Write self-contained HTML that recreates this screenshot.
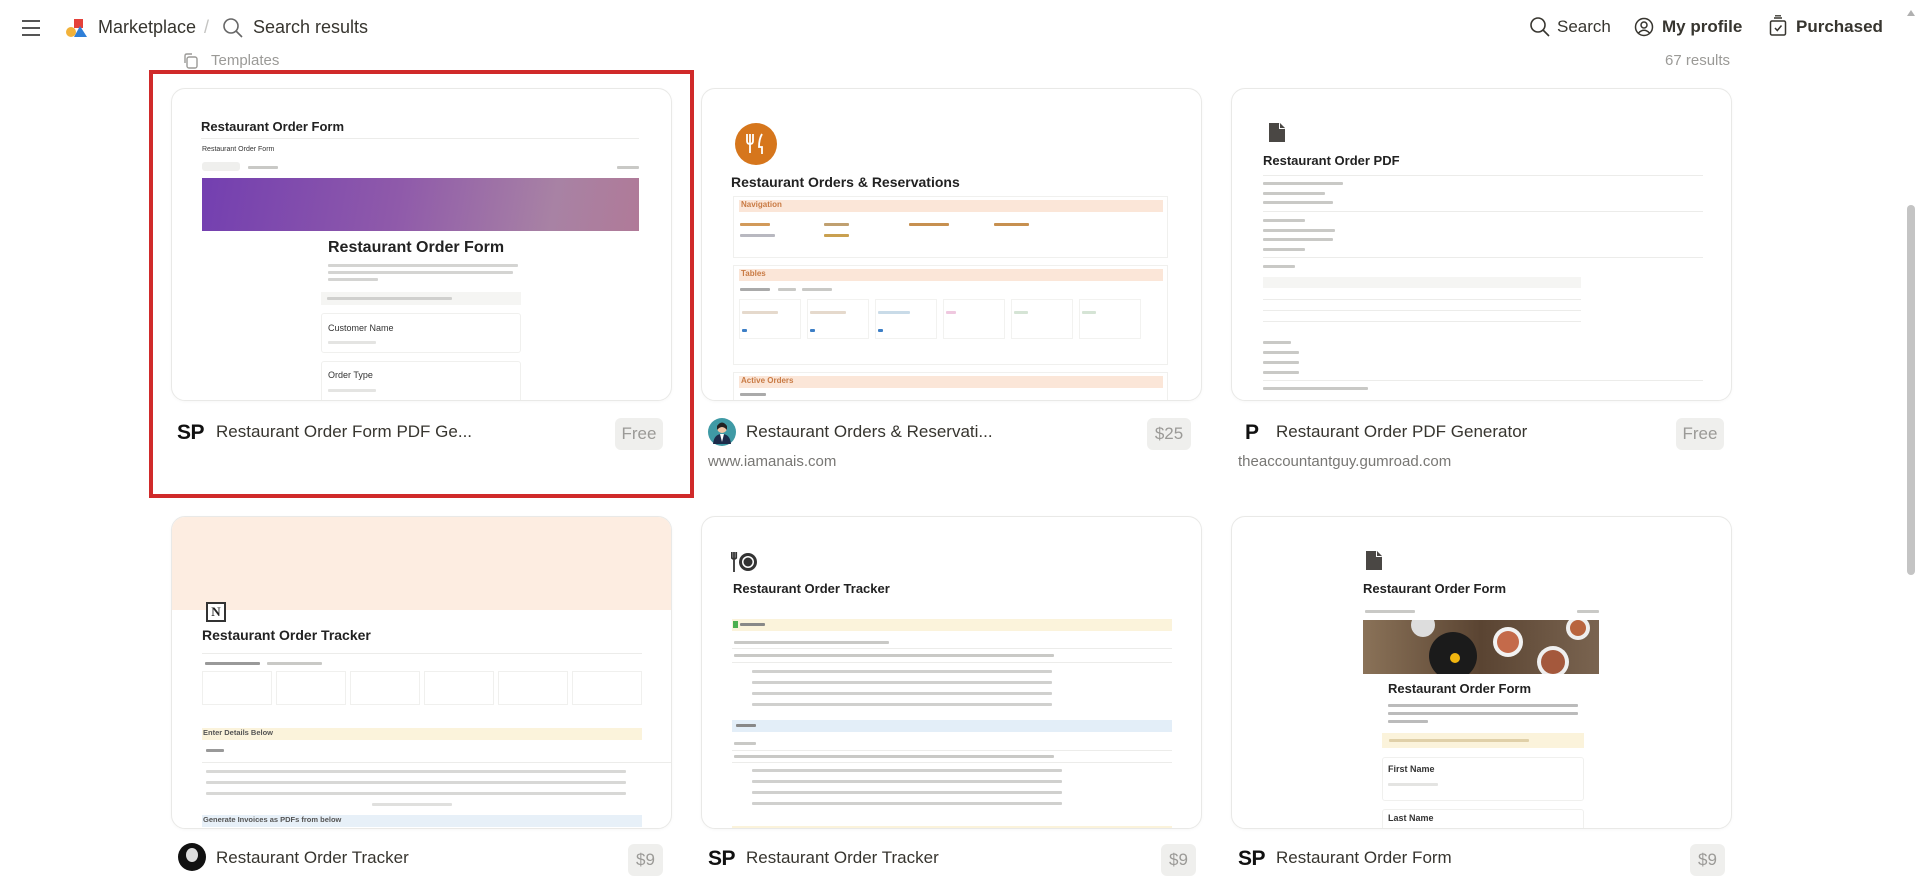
<!DOCTYPE html>
<html><head><meta charset="utf-8">
<style>
*{box-sizing:border-box;margin:0;padding:0}
html,body{width:1918px;height:867px;overflow:hidden;background:#fff;font-family:"Liberation Sans",sans-serif;color:#37352f}
.abs{position:absolute}
.card{position:absolute;width:501px;height:313px;border:1px solid #e9e9e7;border-radius:14px;overflow:hidden;background:#fff;box-shadow:0 1px 3px rgba(0,0,0,.03)}
.t{position:absolute;white-space:nowrap}
.tiny{position:absolute;height:3px;background:#c9c9c6;border-radius:1px}
.ln{position:absolute;height:1px;background:#ececea}
.name{position:absolute;font-size:17px;font-weight:500;color:#37352f;white-space:nowrap}
.badge{position:absolute;height:32px;border-radius:6px;background:#efefed;color:#9b9a97;font-size:17px;line-height:32px;text-align:center}
.sub{position:absolute;font-size:15px;color:#787774}
.sp{position:absolute;font-size:21px;font-weight:bold;color:#111;letter-spacing:-0.5px}
</style></head><body>

<!-- header -->
<div class="abs" style="left:22px;top:20px;width:18px;height:2px;background:#555"></div>
<div class="abs" style="left:22px;top:27px;width:18px;height:2px;background:#555"></div>
<div class="abs" style="left:22px;top:34px;width:18px;height:2px;background:#555"></div>
<svg class="abs" style="left:65px;top:17px" width="24" height="22" viewBox="0 0 24 22">
<circle cx="6" cy="15" r="5" fill="#f2b23a"/><rect x="9" y="2" width="9" height="9" fill="#e4413a"/><polygon points="15,9 22,20 9,20" fill="#2f7fd8"/></svg>
<div class="t" style="left:98px;top:17px;font-size:18px;color:#37352f">Marketplace</div>
<div class="t" style="left:204px;top:17px;font-size:18px;color:#c4c4c2">/</div>
<svg class="abs" style="left:222px;top:17px" width="22" height="22" viewBox="0 0 22 22"><circle cx="9" cy="9" r="7" fill="none" stroke="#666" stroke-width="1.6"/><line x1="14" y1="14" x2="20" y2="20" stroke="#666" stroke-width="1.6"/></svg>
<div class="t" style="left:253px;top:17px;font-size:18px;color:#37352f">Search results</div>

<svg class="abs" style="left:1529px;top:16px" width="22" height="22" viewBox="0 0 22 22"><circle cx="9" cy="9" r="7" fill="none" stroke="#37352f" stroke-width="1.6"/><line x1="14" y1="14" x2="20" y2="20" stroke="#37352f" stroke-width="1.6"/></svg>
<div class="t" style="left:1557px;top:17px;font-size:17px;color:#37352f">Search</div>
<svg class="abs" style="left:1634px;top:17px" width="20" height="20" viewBox="0 0 20 20"><circle cx="10" cy="10" r="8.5" fill="none" stroke="#37352f" stroke-width="1.5"/><circle cx="10" cy="8" r="3" fill="none" stroke="#37352f" stroke-width="1.5"/><path d="M4.5 16 Q10 10.5 15.5 16" fill="none" stroke="#37352f" stroke-width="1.5"/></svg>
<div class="t" style="left:1662px;top:17px;font-size:17px;font-weight:bold;color:#37352f">My profile</div>
<svg class="abs" style="left:1768px;top:15px" width="20" height="22" viewBox="0 0 20 22"><rect x="2.5" y="6" width="15" height="14" rx="1.5" fill="none" stroke="#37352f" stroke-width="1.5"/><line x1="6" y1="3" x2="14" y2="3" stroke="#37352f" stroke-width="1.5"/><line x1="7" y1="0.8" x2="13" y2="0.8" stroke="#37352f" stroke-width="1.3"/><path d="M7 13 L9.3 15.5 L13.5 10.5" fill="none" stroke="#37352f" stroke-width="1.5"/></svg>
<div class="t" style="left:1796px;top:17px;font-size:17px;font-weight:bold;color:#37352f">Purchased</div>

<svg class="abs" style="left:182px;top:52px" width="18" height="18" viewBox="0 0 18 18"><rect x="5" y="5" width="10" height="11" rx="2" fill="none" stroke="#9b9a97" stroke-width="1.4"/><path d="M3 11 V4 Q3 2 5 2 H10" fill="none" stroke="#9b9a97" stroke-width="1.4"/></svg>
<div class="t" style="left:211px;top:52px;font-size:15px;color:#9b9a97">Templates</div>
<div class="t" style="left:1665px;top:52px;font-size:15px;color:#9b9a97">67 results</div>

<!-- scrollbar -->
<div class="abs" style="left:1903px;top:0;width:15px;height:867px;background:#fff"></div>
<div class="abs" style="left:1907px;top:10px;width:0;height:0;border-left:4px solid transparent;border-right:4px solid transparent;border-bottom:6px solid #b0b0b0"></div>
<div class="abs" style="left:1907px;top:205px;width:8px;height:370px;background:#c4c4c4;border-radius:4px"></div>

<!-- ROW 1 CARD 1 -->
<div class="card" style="left:171px;top:88px">
 <div class="t" style="left:29px;top:30px;font-size:13px;font-weight:bold;color:#222">Restaurant Order Form</div>
 <div class="ln" style="left:29px;top:49px;width:438px"></div>
 <div class="t" style="left:30px;top:57px;font-size:7px;color:#333">Restaurant Order Form</div>
 <div class="abs" style="left:30px;top:73px;width:38px;height:9px;background:#efefed;border-radius:3px"></div>
 <div class="tiny" style="left:76px;top:77px;width:30px"></div>
 <div class="tiny" style="left:445px;top:77px;width:22px"></div>
 <div class="abs" style="left:30px;top:89px;width:437px;height:53px;background:linear-gradient(100deg,#733fb0 0%,#8f5aaa 45%,#a882a4 80%,#b07a98 100%)"></div>
 <div class="t" style="left:156px;top:150px;font-size:16px;font-weight:bold;color:#222">Restaurant Order Form</div>
 <div class="tiny" style="left:156px;top:175px;width:190px;background:#d4d4d2"></div>
 <div class="tiny" style="left:156px;top:182px;width:185px;background:#d4d4d2"></div>
 <div class="tiny" style="left:156px;top:189px;width:50px;background:#d4d4d2"></div>
 <div class="abs" style="left:149px;top:203px;width:200px;height:13px;background:#f5f5f3"></div>
 <div class="tiny" style="left:155px;top:208px;width:125px;background:#d0d0ce"></div>
 <div class="abs" style="left:149px;top:224px;width:200px;height:40px;border:1px solid #f0f0ee;border-radius:3px"></div>
 <div class="t" style="left:156px;top:234px;font-size:9px;color:#333">Customer Name</div>
 <div class="tiny" style="left:156px;top:252px;width:48px;background:#e4e4e2"></div>
 <div class="abs" style="left:149px;top:272px;width:200px;height:45px;border:1px solid #f0f0ee;border-radius:3px"></div>
 <div class="t" style="left:156px;top:281px;font-size:9px;color:#333">Order Type</div>
 <div class="tiny" style="left:156px;top:300px;width:48px;background:#e4e4e2"></div>
</div>
<div class="sp" style="left:177px;top:421px">SP</div>
<div class="name" style="left:216px;top:422px">Restaurant Order Form PDF Ge...</div>
<div class="badge" style="left:615px;top:418px;width:48px">Free</div>

<!-- ROW 1 CARD 2 -->
<div class="card" style="left:701px;top:88px">
 <svg class="abs" style="left:33px;top:34px" width="42" height="42" viewBox="0 0 42 42"><circle cx="21" cy="21" r="21" fill="#d6761c"/><path d="M15 11 V30 M12 11 V18 Q12 21 15 21 Q18 21 18 18 V11 M27 11 Q24 16 24 24 H27 V31" fill="none" stroke="#fff" stroke-width="1.8"/></svg>
 <div class="t" style="left:29px;top:85px;font-size:14px;font-weight:bold;color:#222">Restaurant Orders &amp; Reservations</div>
 <div class="abs" style="left:31px;top:107px;width:435px;height:62px;border:1px solid #f0f0ee"></div>
 <div class="abs" style="left:37px;top:111px;width:424px;height:12px;background:#fbe6d8"></div>
 <div class="t" style="left:39px;top:111px;font-size:8px;font-weight:bold;color:#c97b45">Navigation</div>
 <div class="tiny" style="left:38px;top:134px;width:30px;background:#d29a5a"></div><div class="tiny" style="left:122px;top:134px;width:25px;background:#c0a070"></div><div class="tiny" style="left:207px;top:134px;width:40px;background:#c79050"></div><div class="tiny" style="left:292px;top:134px;width:35px;background:#c79050"></div>
 <div class="tiny" style="left:38px;top:145px;width:35px;background:#b8b8c0"></div><div class="tiny" style="left:122px;top:145px;width:25px;background:#c9a050"></div>
 <div class="abs" style="left:31px;top:176px;width:435px;height:100px;border:1px solid #f0f0ee"></div>
 <div class="abs" style="left:37px;top:180px;width:424px;height:12px;background:#fbe6d8"></div>
 <div class="t" style="left:39px;top:180px;font-size:8px;font-weight:bold;color:#c97b45">Tables</div>
 <div class="tiny" style="left:38px;top:199px;width:30px;background:#aaa"></div><div class="tiny" style="left:76px;top:199px;width:18px"></div><div class="tiny" style="left:100px;top:199px;width:30px"></div>
 <div class="abs" style="left:37px;top:210px;width:62px;height:40px;border:1px solid #f2f2f0"></div>
 <div class="abs" style="left:105px;top:210px;width:62px;height:40px;border:1px solid #f2f2f0"></div>
 <div class="abs" style="left:173px;top:210px;width:62px;height:40px;border:1px solid #f2f2f0"></div>
 <div class="abs" style="left:241px;top:210px;width:62px;height:40px;border:1px solid #f2f2f0"></div>
 <div class="abs" style="left:309px;top:210px;width:62px;height:40px;border:1px solid #f2f2f0"></div>
 <div class="abs" style="left:377px;top:210px;width:62px;height:40px;border:1px solid #f2f2f0"></div>
 <div class="tiny" style="left:40px;top:222px;width:36px;background:#e5d9cc"></div><div class="tiny" style="left:108px;top:222px;width:36px;background:#e5d9cc"></div><div class="tiny" style="left:176px;top:222px;width:32px;background:#c9dbe8"></div><div class="tiny" style="left:244px;top:222px;width:10px;background:#efc8df"></div><div class="tiny" style="left:312px;top:222px;width:14px;background:#d5e4d5"></div><div class="tiny" style="left:380px;top:222px;width:14px;background:#d5e4d5"></div>
 <div class="tiny" style="left:40px;top:240px;width:5px;background:#3d7fc6"></div><div class="tiny" style="left:108px;top:240px;width:5px;background:#3d7fc6"></div><div class="tiny" style="left:176px;top:240px;width:5px;background:#3d7fc6"></div>
 <div class="abs" style="left:31px;top:283px;width:435px;height:40px;border:1px solid #f0f0ee"></div>
 <div class="abs" style="left:37px;top:287px;width:424px;height:12px;background:#fbe6d8"></div>
 <div class="t" style="left:39px;top:287px;font-size:8px;font-weight:bold;color:#c97b45">Active Orders</div>
 <div class="tiny" style="left:38px;top:304px;width:26px;background:#aaa"></div>
</div>
<svg class="abs" style="left:708px;top:418px" width="28" height="28" viewBox="0 0 28 28"><circle cx="14" cy="14" r="14" fill="#3f9aa5"/><circle cx="14" cy="10" r="5" fill="#f0c6a6"/><path d="M9 8 Q14 1 19 8 L19 12 Q14 6 9 12Z" fill="#222"/><path d="M5 26 Q6 16 14 16 Q22 16 23 26Z" fill="#1d2b4a"/><path d="M12 16 L14 24 L16 16Z" fill="#fff"/></svg>
<div class="name" style="left:746px;top:422px">Restaurant Orders &amp; Reservati...</div>
<div class="badge" style="left:1147px;top:418px;width:44px">$25</div>
<div class="sub" style="left:708px;top:453px">www.iamanais.com</div>

<!-- ROW 1 CARD 3 -->
<div class="card" style="left:1231px;top:88px">
 <svg class="abs" style="left:37px;top:34px" width="16" height="19" viewBox="0 0 16 19"><path d="M0 0 H10 L16 6 V19 H0Z" fill="#4a4744"/><path d="M10 0 V6 H16" fill="#fff"/><path d="M11 0 L16 5 H11Z" fill="#4a4744"/></svg>
 <div class="t" style="left:31px;top:64px;font-size:13px;font-weight:bold;color:#222">Restaurant Order PDF</div>
 <div class="ln" style="left:31px;top:86px;width:440px"></div>
 <div class="tiny" style="left:31px;top:93px;width:80px"></div>
 <div class="tiny" style="left:31px;top:103px;width:62px"></div>
 <div class="tiny" style="left:31px;top:112px;width:70px"></div>
 <div class="ln" style="left:31px;top:122px;width:440px"></div>
 <div class="tiny" style="left:31px;top:130px;width:42px"></div>
 <div class="tiny" style="left:31px;top:140px;width:72px"></div>
 <div class="tiny" style="left:31px;top:149px;width:70px"></div>
 <div class="tiny" style="left:31px;top:159px;width:42px"></div>
 <div class="ln" style="left:31px;top:168px;width:440px"></div>
 <div class="tiny" style="left:31px;top:176px;width:32px"></div>
 <div class="abs" style="left:31px;top:188px;width:318px;height:11px;background:#f5f5f3"></div>
 <div class="ln" style="left:31px;top:210px;width:318px"></div>
 <div class="ln" style="left:31px;top:221px;width:318px"></div>
 <div class="ln" style="left:31px;top:232px;width:318px"></div>
 <div class="tiny" style="left:31px;top:252px;width:28px"></div>
 <div class="tiny" style="left:31px;top:262px;width:36px"></div>
 <div class="tiny" style="left:31px;top:272px;width:36px"></div>
 <div class="tiny" style="left:31px;top:282px;width:36px"></div>
 <div class="ln" style="left:31px;top:291px;width:440px"></div>
 <div class="tiny" style="left:31px;top:298px;width:105px"></div>
</div>
<div class="sp" style="left:1245px;top:421px">P</div>
<div class="name" style="left:1276px;top:422px">Restaurant Order PDF Generator</div>
<div class="badge" style="left:1676px;top:418px;width:48px">Free</div>
<div class="sub" style="left:1238px;top:453px">theaccountantguy.gumroad.com</div>

<!-- ROW 2 CARD 1 -->
<div class="card" style="left:171px;top:516px">
 <div class="abs" style="left:0;top:0;width:501px;height:93px;background:#fdede1"></div>
 <div class="abs" style="left:34px;top:85px;width:20px;height:20px;border:2px solid #333;background:#fff;font:bold 13px 'Liberation Serif',serif;text-align:center;line-height:16px;color:#222">N</div>
 <div class="t" style="left:30px;top:110px;font-size:14px;font-weight:bold;color:#222">Restaurant Order Tracker</div>
 <div class="ln" style="left:30px;top:136px;width:440px"></div>
 <div class="tiny" style="left:33px;top:145px;width:55px;background:#999"></div><div class="tiny" style="left:95px;top:145px;width:55px"></div>
 <div class="abs" style="left:30px;top:154px;width:70px;height:34px;border:1px solid #f0f0ee"></div>
 <div class="abs" style="left:104px;top:154px;width:70px;height:34px;border:1px solid #f0f0ee"></div>
 <div class="abs" style="left:178px;top:154px;width:70px;height:34px;border:1px solid #f0f0ee"></div>
 <div class="abs" style="left:252px;top:154px;width:70px;height:34px;border:1px solid #f0f0ee"></div>
 <div class="abs" style="left:326px;top:154px;width:70px;height:34px;border:1px solid #f0f0ee"></div>
 <div class="abs" style="left:400px;top:154px;width:70px;height:34px;border:1px solid #f0f0ee"></div>
 <div class="abs" style="left:30px;top:211px;width:440px;height:12px;background:#fbf3db"></div>
 <div class="t" style="left:31px;top:211px;font-size:7.5px;font-weight:bold;color:#555">Enter Details Below</div>
 <div class="tiny" style="left:34px;top:232px;width:18px;background:#999"></div>
 <div class="ln" style="left:30px;top:245px;width:470px"></div>
 <div class="tiny" style="left:34px;top:253px;width:420px;background:#d8d8d6"></div>
 <div class="tiny" style="left:34px;top:264px;width:420px;background:#d8d8d6"></div>
 <div class="tiny" style="left:34px;top:275px;width:420px;background:#d8d8d6"></div>
 <div class="tiny" style="left:200px;top:286px;width:80px;background:#e0e0de"></div>
 <div class="abs" style="left:30px;top:298px;width:440px;height:12px;background:#e7f0f8"></div>
 <div class="t" style="left:31px;top:298px;font-size:7.5px;font-weight:bold;color:#555">Generate Invoices as PDFs from below</div>
</div>
<svg class="abs" style="left:178px;top:843px" width="28" height="28" viewBox="0 0 28 28"><circle cx="14" cy="14" r="14" fill="#111"/><ellipse cx="14" cy="12" rx="6" ry="7" fill="#ddd"/></svg>
<div class="name" style="left:216px;top:848px">Restaurant Order Tracker</div>
<div class="badge" style="left:628px;top:844px;width:35px">$9</div>

<!-- ROW 2 CARD 2 -->
<div class="card" style="left:701px;top:516px">
 <svg class="abs" style="left:29px;top:34px" width="28" height="22" viewBox="0 0 28 22"><path d="M3 1 V21 M0.8 1 V7 Q3 9 5.2 7 V1" fill="none" stroke="#333" stroke-width="1.8"/><circle cx="17" cy="11" r="9" fill="#333"/><circle cx="17" cy="11" r="6" fill="#fff"/><circle cx="17" cy="11" r="4.5" fill="#333"/></svg>
 <div class="t" style="left:31px;top:64px;font-size:13px;font-weight:bold;color:#222">Restaurant Order Tracker</div>
 <div class="abs" style="left:30px;top:102px;width:440px;height:12px;background:#fbf3db"></div>
 <div class="abs" style="left:31px;top:104px;width:5px;height:7px;background:#4caf50"></div>
 <div class="tiny" style="left:38px;top:106px;width:25px;background:#888"></div>
 <div class="tiny" style="left:32px;top:124px;width:155px"></div>
 <div class="ln" style="left:30px;top:131px;width:440px"></div>
 <div class="tiny" style="left:32px;top:137px;width:320px"></div>
 <div class="ln" style="left:30px;top:145px;width:440px"></div>
 <div class="tiny" style="left:50px;top:153px;width:300px;background:#d0d0ce"></div>
 <div class="tiny" style="left:50px;top:164px;width:300px;background:#d0d0ce"></div>
 <div class="tiny" style="left:50px;top:175px;width:300px;background:#d0d0ce"></div>
 <div class="tiny" style="left:50px;top:186px;width:300px;background:#d0d0ce"></div>
 <div class="abs" style="left:30px;top:203px;width:440px;height:12px;background:#e3eef8"></div>
 <div class="tiny" style="left:34px;top:207px;width:20px;background:#888"></div>
 <div class="tiny" style="left:32px;top:225px;width:22px"></div>
 <div class="ln" style="left:30px;top:233px;width:440px"></div>
 <div class="tiny" style="left:32px;top:238px;width:320px"></div>
 <div class="ln" style="left:30px;top:245px;width:440px"></div>
 <div class="tiny" style="left:50px;top:252px;width:310px;background:#d0d0ce"></div>
 <div class="tiny" style="left:50px;top:263px;width:310px;background:#d0d0ce"></div>
 <div class="tiny" style="left:50px;top:274px;width:310px;background:#d0d0ce"></div>
 <div class="tiny" style="left:50px;top:285px;width:310px;background:#d0d0ce"></div>
 <div class="abs" style="left:30px;top:309px;width:440px;height:6px;background:#fbf3db"></div>
</div>
<div class="sp" style="left:708px;top:847px">SP</div>
<div class="name" style="left:746px;top:848px">Restaurant Order Tracker</div>
<div class="badge" style="left:1161px;top:844px;width:35px">$9</div>

<!-- ROW 2 CARD 3 -->
<div class="card" style="left:1231px;top:516px">
 <svg class="abs" style="left:134px;top:34px" width="16" height="19" viewBox="0 0 16 19"><path d="M0 0 H10 L16 6 V19 H0Z" fill="#4a4744"/><path d="M10 0 V6 H16" fill="#fff"/><path d="M11 0 L16 5 H11Z" fill="#4a4744"/></svg>
 <div class="t" style="left:131px;top:64px;font-size:13px;font-weight:bold;color:#222">Restaurant Order Form</div>
 <div class="tiny" style="left:133px;top:93px;width:50px"></div><div class="tiny" style="left:345px;top:93px;width:22px"></div>
 <svg class="abs" style="left:131px;top:103px" width="236" height="54" viewBox="0 0 236 54">
  <rect width="236" height="54" fill="#6b5440"/>
  <rect x="0" y="0" width="236" height="54" fill="url(#g)"/>
  <defs><linearGradient id="g" x1="0" x2="1"><stop offset="0" stop-color="#8a7258"/><stop offset=".5" stop-color="#5a4432"/><stop offset="1" stop-color="#7a6450"/></linearGradient></defs>
  <circle cx="90" cy="36" r="24" fill="#1b1b1b"/><circle cx="92" cy="38" r="5" fill="#f2b60f"/>
  <circle cx="145" cy="22" r="15" fill="#f2f2f2"/><circle cx="145" cy="22" r="11" fill="#c46a4a"/>
  <circle cx="190" cy="42" r="16" fill="#efefef"/><circle cx="190" cy="42" r="12" fill="#a4583c"/>
  <circle cx="215" cy="8" r="12" fill="#eee"/><circle cx="215" cy="8" r="8" fill="#b8643e"/>
  <circle cx="60" cy="5" r="12" fill="#ddd"/>
 </svg>
 <div class="t" style="left:156px;top:164px;font-size:13px;font-weight:bold;color:#222">Restaurant Order Form</div>
 <div class="tiny" style="left:156px;top:187px;width:190px;background:#bbb"></div>
 <div class="tiny" style="left:156px;top:195px;width:190px;background:#bbb"></div>
 <div class="tiny" style="left:156px;top:203px;width:40px;background:#bbb"></div>
 <div class="abs" style="left:150px;top:216px;width:202px;height:15px;background:#fbf3db"></div>
 <div class="tiny" style="left:157px;top:222px;width:140px;background:#e0d0a8"></div>
 <div class="abs" style="left:150px;top:240px;width:202px;height:44px;border:1px solid #f0f0ee;border-radius:3px"></div>
 <div class="t" style="left:156px;top:247px;font-size:9px;font-weight:bold;color:#333">First Name</div>
 <div class="tiny" style="left:156px;top:266px;width:50px;background:#e4e4e2"></div>
 <div class="abs" style="left:150px;top:292px;width:202px;height:40px;border:1px solid #f0f0ee;border-radius:3px"></div>
 <div class="t" style="left:156px;top:296px;font-size:9px;font-weight:bold;color:#333">Last Name</div>
</div>
<div class="sp" style="left:1238px;top:847px">SP</div>
<div class="name" style="left:1276px;top:848px">Restaurant Order Form</div>
<div class="badge" style="left:1690px;top:844px;width:35px">$9</div>

<!-- red highlight -->
<div class="abs" style="left:149px;top:70px;width:545px;height:428px;border:4px solid #d02a2a"></div>
</body></html>
